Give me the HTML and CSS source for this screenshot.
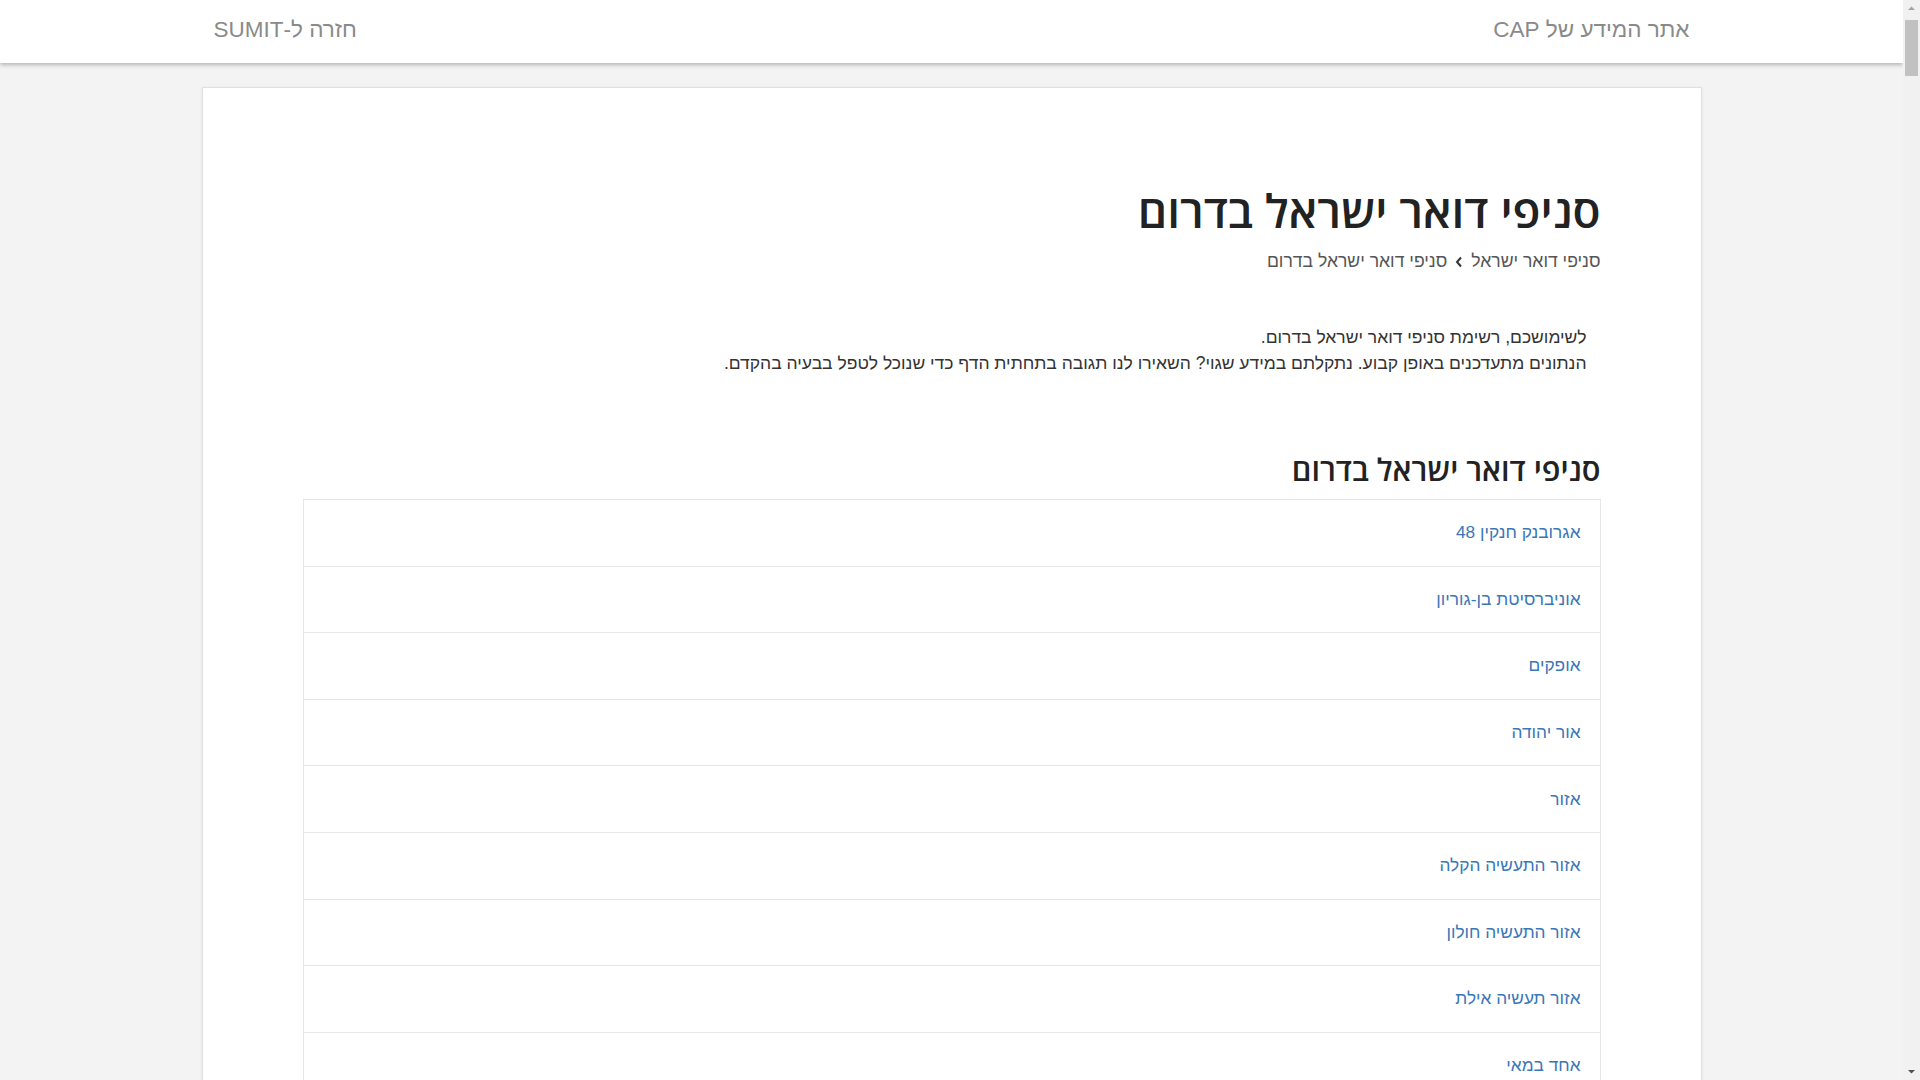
FILE: index.html
```html
<!DOCTYPE html>
<html lang="he" dir="rtl">
<head>
<meta charset="utf-8">
<title>סניפי דואר ישראל בדרום</title>
<link rel="stylesheet" href="styles.css">
</head>
<body>
<header class="topbar">
  <div class="topbar-inner">
    <a class="brand" href="#">אתר המידע של CAP</a>
    <a class="back" href="#">חזרה ל-SUMIT</a>
  </div>
</header>
<main class="page">
  <div class="card">
    <h1 class="title">סניפי דואר ישראל בדרום</h1>
    <nav class="crumbs">
      <a href="#">סניפי דואר ישראל</a>
      <svg class="chev" width="8" height="12" viewBox="0 0 8 12"><path d="M6 1.5 L2 6 L6 10.5" fill="none" stroke="#333" stroke-width="2"/></svg>
      <span>סניפי דואר ישראל בדרום</span>
    </nav>
    <div class="intro">
      <p>לשימושכם, רשימת סניפי דואר ישראל בדרום.</p>
      <p>הנתונים מתעדכנים באופן קבוע. נתקלתם במידע שגוי? השאירו לנו תגובה בתחתית הדף כדי שנוכל לטפל בבעיה בהקדם.</p>
    </div>
    <h2 class="subtitle">סניפי דואר ישראל בדרום</h2>
    <ul class="list">
      <li><a href="#">אגרובנק חנקין 48</a></li>
      <li><a href="#">אוניברסיטת בן-גוריון</a></li>
      <li><a href="#">אופקים</a></li>
      <li><a href="#">אור יהודה</a></li>
      <li><a href="#">אזור</a></li>
      <li><a href="#">אזור התעשיה הקלה</a></li>
      <li><a href="#">אזור התעשיה חולון</a></li>
      <li><a href="#">אזור תעשיה אילת</a></li>
      <li><a href="#">אחד במאי</a></li>
    </ul>
  </div>
</main>
<div class="scrollbar" aria-hidden="true">
  <svg class="arrow up" width="17" height="17" viewBox="0 0 17 17"><path d="M5 10 L8.5 6.5 L12 10 Z" fill="#a3a3a3"/></svg>
  <div class="thumb"></div>
  <div class="track"></div>
  <svg class="arrow down" width="17" height="17" viewBox="0 0 17 17"><path d="M5 7 L8.5 10.5 L12 7 Z" fill="#505050"/></svg>
</div>
</body>
</html>
```
FILE: styles.css
```css
html, body {
  margin: 0;
  padding: 0;
}
html { height: 100%; overflow: hidden; }
body {
  background: #f3f3f3;
  font-family: "Liberation Sans", Arial, sans-serif;
  color: #333;
  padding-right: 17px;
  height: 100%;
  overflow: hidden;
  box-sizing: border-box;
}
a { text-decoration: none; }

.topbar {
  background: #fff;
  height: 63px;
  box-shadow: 0 2px 4px rgba(0,0,0,0.25);
  position: relative;
  z-index: 2;
}
.topbar-inner {
  width: 1476px;
  margin: 0 auto;
  height: 63px;
  display: flex;
  justify-content: space-between;
  align-items: center;
}
.topbar a {
  color: #8a8a8a;
  font-size: 22.5px;
  margin-top: -3px;
}

.page {
  width: 1500px;
  margin: 24px auto 0;
}
.card {
  background: #fff;
  border: 1px solid #e0e0e0;
  box-shadow: 0 1px 3px rgba(0,0,0,0.08);
  padding: 92px 100px 40px;
}
.title {
  margin: 0;
  font-family: "Open Sans", "DejaVu Sans", sans-serif;
  font-weight: 600;
  font-size: 46px;
  line-height: 60px;
  color: #222;
}
.crumbs {
  margin-top: 11px;
  display: flex;
  align-items: center;
  gap: 8px;
  font-size: 17.6px;
  color: #555;
}
.crumbs a { color: #555; }
.intro {
  margin: 52px 14px 0 0;
  font-size: 17.5px;
  line-height: 26px;
  color: #333;
}
.intro p { margin: 0; }
.subtitle {
  margin: 73px 0 10px;
  font-family: "Open Sans", "DejaVu Sans", sans-serif;
  font-weight: 600;
  font-size: 30.7px;
  line-height: 40px;
  color: #222;
}
.list {
  list-style: none;
  margin: 0;
  padding: 0;
  border: 1px solid #e6e6e6;
}
.list li {
  height: 65.6px;
  display: flex;
  align-items: center;
  padding: 0 19px;
  border-top: 1px solid #e6e6e6;
}
.list li:first-child { border-top: none; }
.list a {
  color: #3a77b8;
  font-size: 17.3px;
}

.scrollbar {
  position: fixed;
  top: 0;
  right: 0;
  width: 17px;
  height: 100%;
  background: #f1f1f1;
  display: flex;
  flex-direction: column;
  z-index: 5;
}
.scrollbar .arrow { flex: none; }
.scrollbar .thumb {
  flex: none;
  height: 56px;
  margin: 3px 2px 0;
  background: #c1c1c1;
}
.scrollbar .track { flex: 1; }
```
